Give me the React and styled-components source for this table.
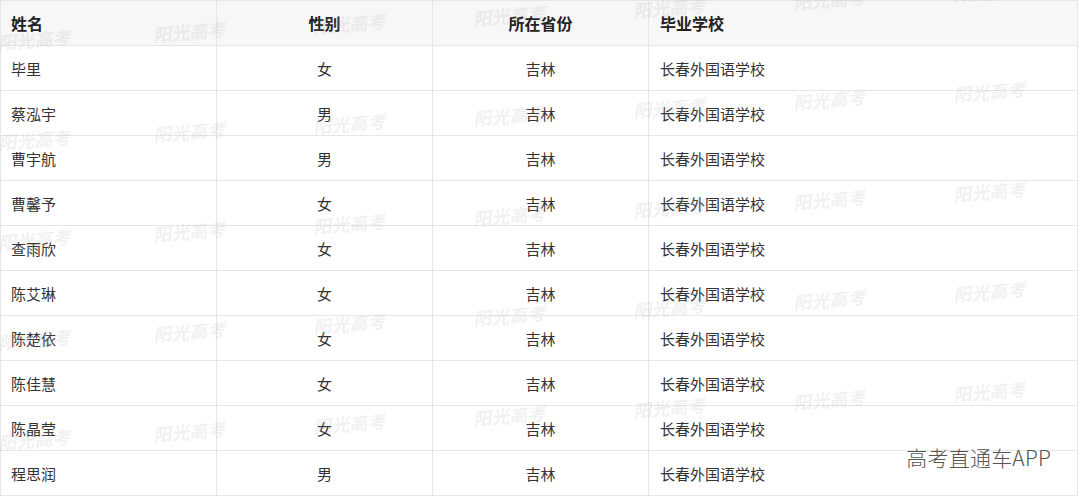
import styled, { createGlobalStyle } from "styled-components";

const GlobalStyle = createGlobalStyle`
  body {
    margin: 0;
    background: #ffffff;
    font-family: "Noto Sans CJK SC", "Noto Sans", sans-serif;
  }
`;

const Page = styled.div`
  position: relative;
  width: 1080px;
  height: 497px;
  overflow: hidden;
  background: #ffffff;
`;

const Table = styled.div`
  width: 1078px;
  border-top: 1px solid #e6e6e6;
  border-left: 1px solid #e6e6e6;
  box-sizing: border-box;
`;

const Row = styled.div`
  display: grid;
  grid-template-columns: 216px 216px 216px 1fr;
  height: 45px;
  box-sizing: border-box;
  border-bottom: 1px solid #e6e6e6;
  background: ${(p) => (p.$head ? "#f7f7f7" : "#ffffff")};
`;

const Cell = styled.div`
  display: flex;
  align-items: center;
  justify-content: ${(p) => (p.$center ? "center" : "flex-start")};
  padding: 0 11px;
  border-right: 1px solid #e6e6e6;
  box-sizing: border-box;
  font-size: ${(p) => (p.$head ? "16px" : "15px")};
  font-weight: ${(p) => (p.$head ? 700 : 400)};
  color: ${(p) => (p.$head ? "#222" : "#333")};
  white-space: nowrap;
  &:first-child {
    margin-left: -1px;
  }
`;

const Marks = styled.div`
  position: absolute;
  inset: 0;
  pointer-events: none;
`;

const Mark = styled.span`
  position: absolute;
  font-family: "Liberation Serif", "Noto Sans CJK SC", serif;
  font-size: 18px;
  font-weight: 700;
  font-style: italic;
  color: rgba(170, 170, 170, 0.18);
  transform: rotate(-5deg);
  white-space: nowrap;
  transform-origin: center;
`;

const Brand = styled.div`
  position: absolute;
  right: 29px;
  bottom: 25px;
  font-size: 21px;
  font-weight: 300;
  color: #555;
  letter-spacing: 0.2px;
`;

const students = [
  ["毕里", "女"],
  ["蔡泓宇", "男"],
  ["曹宇航", "男"],
  ["曹馨予", "女"],
  ["查雨欣", "女"],
  ["陈艾琳", "女"],
  ["陈楚依", "女"],
  ["陈佳慧", "女"],
  ["陈晶莹", "女"],
  ["程思润", "男"],
];

// watermark grid: 160px apart, 100px per row, drifting up to the right
const marks = [];
for (let r = 0; r < 5; r++) {
  for (let c = 0; c < 7; c++) {
    const x = -2 + c * 160 + (c === 0 ? 0 : -5);
    const y = 38 + r * 100 - c * 8;
    marks.push({ x, y, key: `${r}-${c}` });
  }
}

export default function App() {
  return (
    <Page>
      <GlobalStyle />
      <Table>
        <Row $head>
          <Cell $head>姓名</Cell>
          <Cell $head $center>性别</Cell>
          <Cell $head $center>所在省份</Cell>
          <Cell $head>毕业学校</Cell>
        </Row>
        {students.map(([name, sex]) => (
          <Row key={name}>
            <Cell>{name}</Cell>
            <Cell $center>{sex}</Cell>
            <Cell $center>吉林</Cell>
            <Cell>长春外国语学校</Cell>
          </Row>
        ))}
      </Table>
      <Marks>
        {marks.map((m) => (
          <Mark key={m.key} style={{ left: m.x, top: m.y - 12 }}>
            阳光高考
          </Mark>
        ))}
      </Marks>
      <Brand>高考直通车APP</Brand>
    </Page>
  );
}
